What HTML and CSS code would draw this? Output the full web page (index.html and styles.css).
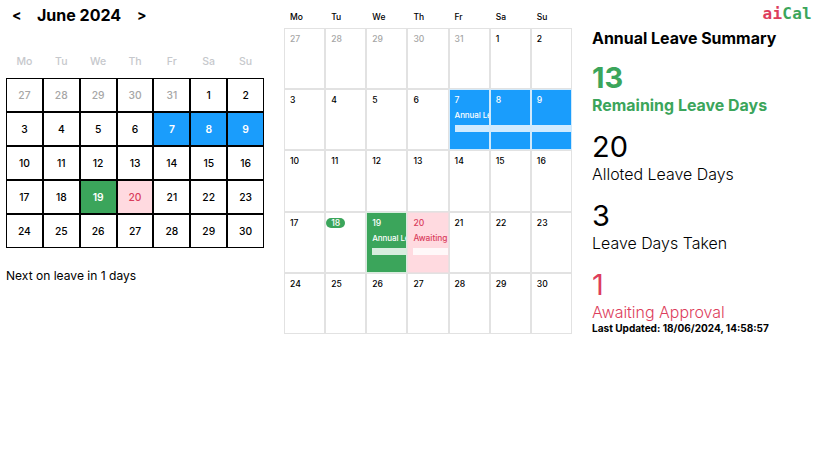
FILE: index.html
```html
<!DOCTYPE html>
<html lang="en">
<head>
<meta charset="utf-8">
<title>aiCal</title>
<link rel="stylesheet" href="styles.css">
</head>
<body>
<div class="app">
  <section class="mini">
    <header class="month"><button>&lt;</button><h1>June 2024</h1><button>&gt;</button></header>
    <div class="mini-head"><span>Mo</span><span>Tu</span><span>We</span><span>Th</span><span>Fr</span><span>Sa</span><span>Su</span></div>
    <div class="mini-grid">
      <div class="out">27</div><div class="out">28</div><div class="out">29</div><div class="out">30</div><div class="out">31</div><div>1</div><div>2</div>
      <div>3</div><div>4</div><div>5</div><div>6</div><div class="blue">7</div><div class="blue">8</div><div class="blue">9</div>
      <div>10</div><div>11</div><div>12</div><div>13</div><div>14</div><div>15</div><div>16</div>
      <div>17</div><div>18</div><div class="green">19</div><div class="pink">20</div><div>21</div><div>22</div><div>23</div>
      <div>24</div><div>25</div><div>26</div><div>27</div><div>28</div><div>29</div><div>30</div>
    </div>
    <p class="next">Next on leave in 1 days</p>
  </section>
  <section class="full">
    <div class="full-head"><span>Mo</span><span>Tu</span><span>We</span><span>Th</span><span>Fr</span><span>Sa</span><span>Su</span></div>
    <div class="full-grid">
      <div class="out">27</div><div class="out">28</div><div class="out">29</div><div class="out">30</div><div class="out">31</div><div>1</div><div>2</div>
      <div>3</div><div>4</div><div>5</div><div>6</div>
      <div class="blue">7<p>Annual Le</p><i class="bar"></i></div>
      <div class="blue">8<p></p><i class="bar joined"></i></div>
      <div class="blue">9<p></p><i class="bar joined"></i></div>
      <div>10</div><div>11</div><div>12</div><div>13</div><div>14</div><div>15</div><div>16</div>
      <div>17</div><div><b class="today">18</b></div>
      <div class="green">19<p>Annual Le</p><i class="bar"></i></div>
      <div class="pink">20<p>Awaiting</p><i class="bar"></i></div>
      <div>21</div><div>22</div><div>23</div>
      <div>24</div><div>25</div><div>26</div><div>27</div><div>28</div><div>29</div><div>30</div>
    </div>
  </section>
  <section class="summary">
    <div class="logo"><span>ai</span>Cal</div>
    <h2>Annual Leave Summary</h2>
    <div class="stat remaining"><strong>13</strong><span>Remaining Leave Days</span></div>
    <div class="stat allotted"><strong>20</strong><span>Alloted Leave Days</span></div>
    <div class="stat taken"><strong>3</strong><span>Leave Days Taken</span></div>
    <div class="stat awaiting"><strong>1</strong><span>Awaiting Approval</span></div>
    <p class="updated">Last Updated: 18/06/2024, 14:58:57</p>
  </section>
</div>
</body>
</html>
```
FILE: styles.css
```css
* { box-sizing: border-box; margin: 0; padding: 0; }
body { background: #fff; color: #000; font-family: Inter, "Liberation Sans", sans-serif; }
.app { display: grid; grid-template-columns: 258px 288px 220px; column-gap: 20px; padding-left: 6px; height: 471px; overflow: hidden; }

.month { display: flex; align-items: center; height: 30px; padding-left: 6px; }
.month button { width: 9px; border: 0; background: none; font: 700 14px/20px Inter, sans-serif; color: #000; }
.month h1 { width: 84px; margin: 0 16px; font-size: 16px; line-height: 20px; font-weight: 700; white-space: nowrap; }
.mini-head, .mini-grid, .full-head, .full-grid { display: grid; grid-template-columns: repeat(7, minmax(0, 1fr)); }
.mini-head { height: 34px; margin-top: 14px; color: #c6c8cc; font-size: 10.5px; font-weight: 500; line-height: 35px; text-align: center; }
.mini-grid { grid-auto-rows: 34px; font-size: 10.3px; font-weight: 450; line-height: 33px; text-align: center; }
.mini-grid div { border: 1px solid #000; }
.mini-grid .blue, .mini-grid .green { font-weight: 600; }
.out { color: #a6a6a6; }
.blue { background: #1a9dfc; color: #fff; }
.green { background: #3ba55b; color: #fff; }
.pink { background: #ffdae0; color: #d93d5c; }
.next { margin-top: 20px; font-size: 12.05px; line-height: 16px; }

.full-head { height: 28px; font-size: 8.5px; font-weight: 450; line-height: 35px; padding-left: 6px; margin-right: -6px; }
.full-grid { grid-auto-rows: 61.2px; font-size: 8.6px; font-weight: 450; line-height: 11px; }
.full-grid > div { border: 1px solid #e2e2e2; padding: 5px 0 0 5px; overflow: hidden; }
.full-grid > .blue { border-color: #d0e9fb; font-weight: 550; }
.full-grid > .green { border-color: #d7eddd; font-weight: 550; }
.full-grid > .pink { border-color: #eddde0; }
.full-grid p { height: 10px; margin-top: 4px; font-size: 8.3px; white-space: nowrap; }
.full-grid .blue p, .full-grid .green p { font-size: 8px; letter-spacing: -.1px; }
.bar { display: block; height: 7px; margin-top: 5px; background: rgba(255, 255, 255, .8); }
.bar.joined { margin-left: -5px; }
.today { display: block; width: 19px; height: 10px; margin-left: -5px; border-radius: 5px; background: #3ba55b; color: #fff; text-align: center; font-weight: 500; line-height: 11px; }

.logo { height: 28px; padding-top: 4px; width: 220px; text-align: right; font: 700 16px/20px "DejaVu Sans Mono", monospace; letter-spacing: .25px; color: #3ba55b; }
.logo span { color: #dd3d5c; }
.summary h2 { font-size: 15.95px; line-height: 21px; font-weight: 700; white-space: nowrap; }
.stat { height: 69px; padding-top: 14px; }
.stat strong { display: block; font-size: 29px; line-height: 30px; font-weight: 400; }
.stat span { display: block; margin-top: 2px; font-size: 15.95px; line-height: 22px; font-weight: 300; white-space: nowrap; }
.remaining { color: #3ba55b; }
.remaining strong, .remaining span { font-weight: 700; }
.awaiting { color: #dd3d5c; }
.updated { margin-top: -3px; font-size: 10.05px; line-height: 13px; font-weight: 700; white-space: nowrap; }
```
